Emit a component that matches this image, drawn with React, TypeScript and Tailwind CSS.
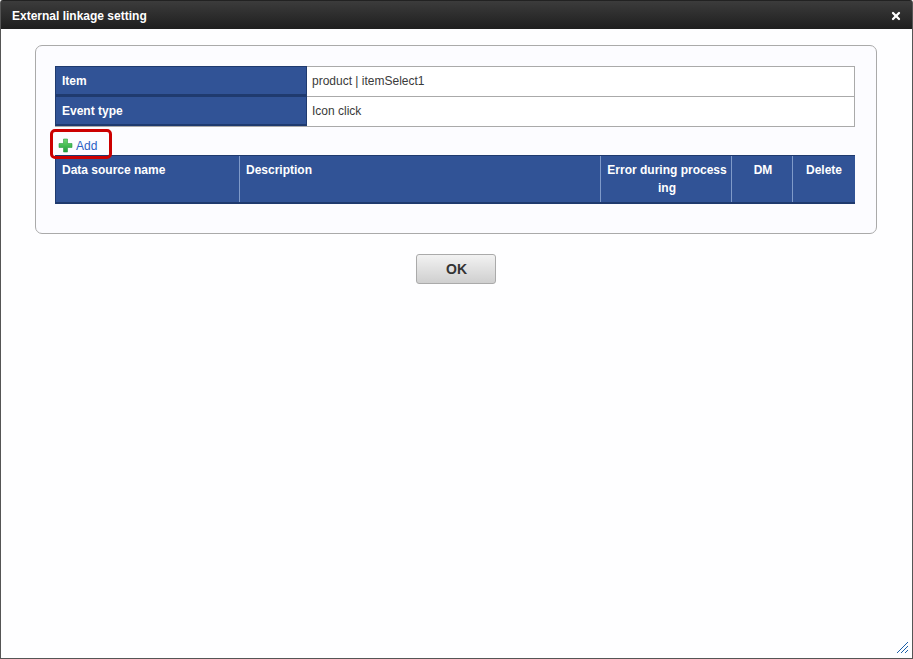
import React from 'react';
import { X } from 'lucide-react';

const infoRows = [
  { label: 'Item', value: 'product | itemSelect1' },
  { label: 'Event type', value: 'Icon click' }
];

const columns = [
  { title: 'Data source name', className: 'w-[184px] px-[6px] text-left' },
  { title: 'Description', className: 'w-[361px] px-[6px] text-left' },
  { title: 'Error during process\ning', className: 'w-[131px] pl-[4px] pr-[2px] text-center' },
  { title: 'DM', className: 'w-[61px] pl-[8px] pr-[6px] text-center' },
  { title: 'Delete', className: 'flex-1 px-[6px] text-center' }
];

export default function App() {
  return (
    <div className="h-[659px] w-[913px] overflow-hidden bg-white font-['Liberation_Sans',Arial,sans-serif] text-xs text-[#3a3a3a]">
      <div className="relative flex h-full flex-col rounded-t-[3px] border border-[#555] border-t-[#222]">
        <div className="flex h-[28px] items-center justify-between bg-gradient-to-b from-[#3c3c3c] to-[#1f1f1f] pl-[11px] pr-[10px] pt-[1px] text-xs font-bold text-white">
          <span>External linkage setting</span>
          <X size={12} strokeWidth={4.5} />
        </div>

        <div className="flex-1 bg-[#fefeff] pl-[34px] pr-[35px] pt-[16px]">
          <div className="rounded-[7px] border border-[#aaa] bg-[#fcfcff] pb-[29px] pl-[19px] pr-[21px] pt-[20px]">
            <div className="border-b border-r border-[#aaa]">
              {infoRows.map((row) => (
                <div key={row.label} className="flex h-[30px]">
                  <div className="flex w-[252px] items-center border border-b-2 border-[#1f3a6e] bg-[#315396] pl-[6px] font-bold text-white">
                    {row.label}
                  </div>
                  <div className="flex flex-1 items-center border-t border-[#aaa] bg-white pb-[2px] pl-[5px]">
                    {row.value}
                  </div>
                </div>
              ))}
            </div>

            <div className="relative flex h-[28px] items-center pl-[3px] pt-[9px]">
              <svg width="15" height="15" viewBox="0 0 15 15">
                <defs>
                  <linearGradient id="plusFill" x1="0" y1="0" x2="0" y2="1">
                    <stop offset="0" stopColor="#6fd96f" />
                    <stop offset="1" stopColor="#1f9e3a" />
                  </linearGradient>
                </defs>
                <path
                  d="M5.5 1 h4 v4.5 h4.5 v4 h-4.5 v4.5 h-4 v-4.5 h-4.5 v-4 h4.5 z"
                  fill="url(#plusFill)"
                  stroke="#2a9a45"
                  strokeWidth="0.6"
                />
              </svg>
              <span className="ml-[3px] text-[#2b5fc4]">Add</span>
              <div className="absolute left-[-5px] top-[2px] h-[30px] w-[62px] rounded-[5px] border-[3px] border-[#cc0000]" />
            </div>

            <div className="flex h-[49px] border-b-2 border-l border-t border-[#1f3a6e] bg-[#315396] font-bold text-white">
              {columns.map((col, i) => (
                <div
                  key={col.title}
                  className={`${col.className} ${i < 4 ? 'border-r border-[#7f9ac9]' : ''} whitespace-pre pt-[5px] leading-[18px]`}
                >
                  {col.title}
                </div>
              ))}
            </div>
          </div>

          <div className="mt-[20px] flex justify-center">
            <button className="h-[30px] w-[80px] rounded-[3px] border border-[#aaa] bg-gradient-to-b from-[#f2f2f2] to-[#cfcfcf] pl-[1px] text-sm font-bold text-[#333]">
              OK
            </button>
          </div>
        </div>

        <svg className="absolute bottom-[4px] right-[4px]" width="12" height="12" viewBox="0 0 12 12" fill="none" stroke="#1c5fa8" strokeWidth="1" shapeRendering="crispEdges">
          <path d="M0.5 11.5 L11.5 0.5 M4.5 11.5 L11.5 4.5 M8.5 11.5 L11.5 8.5" />
        </svg>
      </div>
    </div>
  );
}
